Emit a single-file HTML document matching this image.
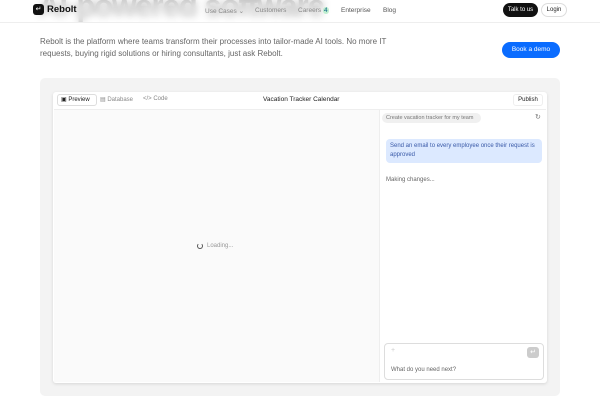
<!DOCTYPE html>
<html><head><style>
*{margin:0;padding:0;box-sizing:border-box}
body{width:600px;height:400px;overflow:hidden;background:#fff;font-family:"Liberation Sans",sans-serif;position:relative;color:#222}
.a{position:absolute}
.hero{left:38px;top:-12px;font-size:31px;font-weight:bold;color:#222;letter-spacing:-1px;white-space:nowrap}
.nav{left:0;top:0;width:600px;height:23px;background:rgba(255,255,255,.72);backdrop-filter:blur(4px);border-bottom:1px solid #eee}
.nl{font-size:6.5px;color:#555;top:7px}
</style></head><body>
<div class="a hero">AI-powered software</div>
<div class="a nav"></div>
<div class="a" style="left:33px;top:4px;width:11px;height:11px;background:#111;border-radius:3px;color:#fff;font-size:7px;text-align:center;line-height:11px">↵</div>
<div class="a" style="left:47px;top:4px;font-size:9.5px;font-weight:bold;color:#111">Rebolt</div>
<div class="a nl" style="left:205px;color:#888">Use Cases ⌄</div>
<div class="a nl" style="left:255px;color:#888">Customers</div>
<div class="a nl" style="left:298px;color:#888">Careers <span style="background:#bfeecf;color:#168;border-radius:4px;padding:0 1px">4</span></div>
<div class="a nl" style="left:341px">Enterprise</div>
<div class="a nl" style="left:383px">Blog</div>
<div class="a" style="left:503px;top:3px;width:35px;height:14px;background:#111;color:#fff;border-radius:7px;font-size:6px;text-align:center;line-height:14px">Talk to us</div>
<div class="a" style="left:541px;top:3px;width:26px;height:14px;border:1px solid #ddd;border-radius:7px;font-size:6px;text-align:center;line-height:12px">Login</div>
<div class="a" style="left:40px;top:36px;font-size:8px;line-height:12px;color:#666;width:370px">Rebolt is the platform where teams transform their processes into tailor-made AI tools. No more IT requests, buying rigid solutions or hiring consultants, just ask Rebolt.</div>
<div class="a" style="left:502px;top:42px;width:58px;height:16px;background:#0a6cff;color:#fff;border-radius:8px;font-size:6.5px;text-align:center;line-height:16px">Book a demo</div>
<div class="a" style="left:40px;top:78px;width:520px;height:318px;background:#f3f3f3;border-radius:5px"></div>
<div class="a" style="left:53px;top:92px;width:494px;height:291px;background:#fff;border-radius:3px;box-shadow:0 1px 3px rgba(0,0,0,.12)"></div>
<div class="a" style="left:54px;top:109px;width:326px;height:273px;background:#fafafa;border-top:1px solid #eee;border-right:1px solid #eee"></div>
<div class="a" style="left:380px;top:109px;width:166px;height:1px;background:#eee"></div>
<div class="a" style="left:57px;top:94px;width:40px;height:12px;border:1px solid #ddd;border-radius:3px;font-size:6px;line-height:10px;padding-left:3px">▣ Preview</div>
<div class="a" style="left:100px;top:96px;font-size:6px;color:#888">▤ Database</div>
<div class="a" style="left:143px;top:96px;font-size:6px;color:#888">&lt;/&gt; Code</div>
<div class="a" style="left:263px;top:96px;font-size:6.5px">Vacation Tracker Calendar</div>
<div class="a" style="left:513px;top:94px;width:30px;height:12px;border:1px solid #eee;border-radius:3px;font-size:6px;text-align:center;line-height:10px">Publish</div>
<div class="a" style="left:197px;top:243px;width:6px;height:6px;border:1px solid #555;border-top-color:transparent;border-radius:50%"></div>
<div class="a" style="left:207px;top:243px;font-size:6px;color:#999">Loading...</div>
<div class="a" style="left:382px;top:113px;width:99px;height:10px;background:#f0f0f0;border-radius:5px;font-size:5.5px;color:#777;line-height:10px;padding-left:4px">Create vacation tracker for my team</div>
<div class="a" style="left:535px;top:113px;font-size:7px;color:#777">↻</div>
<div class="a" style="left:386px;top:139px;width:156px;height:24px;background:#dce9ff;border-radius:4px;font-size:6px;line-height:9px;color:#3a5aa8;padding:3px 4px">Send an email to every employee once their request is approved</div>
<div class="a" style="left:386px;top:177px;font-size:6px;color:#666">Making changes...</div>
<div class="a" style="left:384px;top:343px;width:160px;height:37px;border:1px solid #ddd;border-radius:4px;background:#fff"></div>
<div class="a" style="left:391px;top:347px;font-size:7px;color:#ccc">+</div>
<div class="a" style="left:527px;top:347px;width:12px;height:11px;background:#ccc;border-radius:3px;color:#fff;font-size:7px;text-align:center;line-height:11px">↵</div>
<div class="a" style="left:391px;top:367px;font-size:6px;color:#666">What do you need next?</div>
</body></html>
